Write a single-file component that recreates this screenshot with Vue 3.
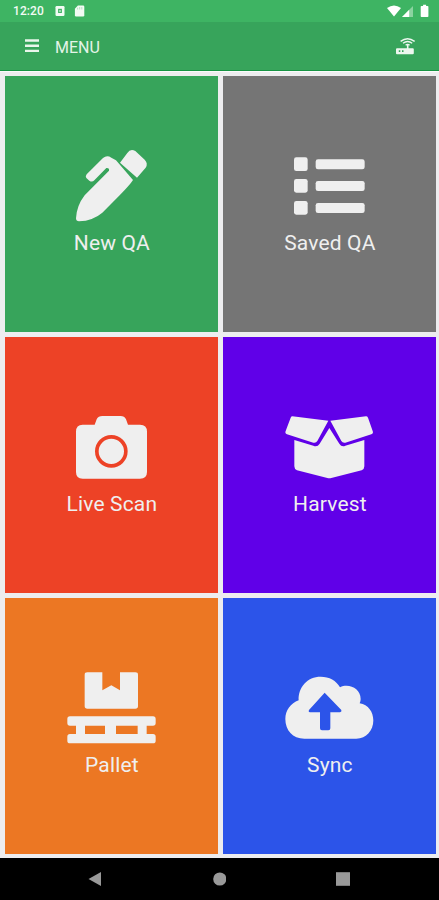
<script setup>
const tiles = [
  { label: 'New QA', color: '#37a45b', icon: 'pen', box: '12 0 288 270' },
  { label: 'Saved QA', color: '#757575', icon: 'list', box: '21 0 288 270' },
  { label: 'Live Scan', color: '#ed4226', icon: 'camera', box: '12 -12 288 270' },
  { label: 'Harvest', color: '#6000e8', icon: 'box', box: '21 -12 288 270' },
  { label: 'Pallet', color: '#ec7723', icon: 'pallet', box: '12 6 288 270' },
  { label: 'Sync', color: '#2c54e9', icon: 'cloud', box: '21 6 288 270' },
]
</script>

<template>
  <div class="screen">
    <div class="status">
      <span class="time">12:20</span>
      <svg class="notices" viewBox="0 0 32 14">
        <rect x="1.5" y="2" width="9" height="10" rx="1.2" fill="#f2fbf4" />
        <path d="M4.1 4.8h3.8v4.2H4.1z" fill="#3eb463" />
        <path d="M5.3 6.2h1.4v1.5H5.3z" fill="#f2fbf4" />
        <path d="M23.9 1.5h5.2q1.2 0 1.2 1.2v8.6q0 1.2-1.2 1.2h-7q-1.2 0-1.2-1.2V4.8z" fill="#f2fbf4" />
        <path d="M23.6 3.7v1.8M25.7 3v2.5M27.8 3v2.5" stroke="#9bd8ad" stroke-width=".7" />
      </svg>
      <svg class="signals" viewBox="0 0 44 14">
        <path d="M1 4Q8 -1 15 4L8 12.4z" fill="#fff" />
        <path d="M27 2v11H16z" fill="#8bd3a0" />
        <path d="M23.2 5.8V13H16z" fill="#fff" />
        <path d="M35.5 2h1.6V.7h3V2h1.5q.8 0 .8.8v9.4q0 .8-.8.8h-6.1q-.8 0-.8-.8V2.8q0-.8.8-.8z" fill="#fff" />
      </svg>
    </div>
    <header class="bar">
      <svg class="burger" viewBox="0 0 14 14">
        <path d="M0 1.5h14M0 6.7h14M0 11.9h14" stroke="#e9f6ec" stroke-width="2.4" />
      </svg>
      <span class="title">MENU</span>
      <svg class="router" viewBox="0 0 20 18">
        <path d="M2 11.2h9.9V7.5h1.6v3.7h4.3q1 0 1 1v4q0 1-1 1H2q-1 0-1-1v-4q0-1 1-1z" fill="#edf7ef" />
        <path d="M3.8 13.3h1.5v1.6H3.8zM7 13.3h1.5v1.6H7z" fill="#37a45b" />
        <path d="M5.6 4.4q7-5.4 14 0M8 6.2q4.6-3.4 9.2 0M10.6 8.2q2-1.6 4 0" fill="none" stroke="#edf7ef" stroke-width="1.4" />
      </svg>
    </header>
    <main class="grid">
      <button v-for="t in tiles" :key="t.label" class="tile" :style="{ background: t.color }">
        <svg class="icon" :viewBox="t.box">
          <g v-if="t.icon === 'pen'">
            <path d="M180 68L202 39Q211 25 226 33L254 59Q265 70 257 83L231 113Z" />
            <path d="M168 61L219 120Q211 133 179 166L127 218Q99 242 57 244Q48 244 48 235Q50 197 74 166L147 92Q149 83 139 84L103 121Q96 128 88 122L79 114Q75 109 80 103L129 54Q141 44 154 53Z" />
          </g>
          <g v-else-if="t.icon === 'list'">
            <rect v-for="y in [52, 117, 183]" :key="y" x="57" :y="y" width="41" height="41" rx="7" />
            <rect v-for="y in [58, 123, 189]" :key="'l' + y" x="122" :y="y" width="147" height="30" rx="7" />
          </g>
          <g v-else-if="t.icon === 'camera'">
            <path d="M68 59H104L110 43Q115 33 127 33H182Q193 33 198 43L204 59H240Q261 59 261 80V201Q261 221 240 221H68Q48 221 48 201V80Q48 59 68 59Z" />
            <circle cx="154" cy="139" r="43.5" fill="none" :stroke="t.color" stroke-width="11" />
          </g>
          <g v-else-if="t.icon === 'box'">
            <path d="M52 34L160 47L127 108Q123 115 115 113L36 88Q29 85 32 78L47 38Q49 34 52 34Z" />
            <path d="M273 34L166 47L199 108Q203 115 211 113L289 88Q296 85 293 78L279 38Q277 34 273 34Z" />
            <path d="M58 105L115 122Q127 127 134 116L163 69L193 116Q200 127 211 122L268 105V184Q268 193 260 196L169 219Q163 221 157 219L66 196Q58 193 58 184Z" />
          </g>
          <g v-else-if="t.icon === 'pallet'">
            <path d="M82 37H127V91L154 76L180 91V37H226Q234 37 234 44V139Q234 146 226 146H82Q74 146 74 139V44Q74 37 82 37Z" />
            <path fill-rule="evenodd" d="M30 169H279Q287 169 287 177V189Q287 197 279 197H260V222H279Q287 222 287 230V242Q287 250 279 250H30Q22 250 22 242V230Q22 222 30 222H48V197H30Q22 197 22 189V177Q22 169 30 169ZM75 197V222H135V197ZM168 197V222H233V197Z" />
          </g>
          <g v-else>
            <path d="M88 236C53 236 31 211 31 177C31 151 47 130 71 121C69 82 97 50 137 50C163 50 184 62 195 82C222 69 257 86 257 117Q257 124 254 130C280 134 295 156 295 181C295 212 274 236 244 236Z" />
            <path d="M149 98L199 150Q201 156 195 157H166V205Q166 211 160 211H141Q135 211 135 205V157H105Q99 156 102 150Z" :fill="t.color" />
          </g>
        </svg>
        <span class="label">{{ t.label }}</span>
      </button>
    </main>
    <nav class="nav">
      <svg viewBox="0 0 14 16"><path d="M13 1v14L.5 8z" /></svg>
      <svg viewBox="0 0 14 16"><circle cx="7.8" cy="8" r="6.6" /></svg>
      <svg viewBox="0 0 14 16"><path d="M0 1.2h14v13.6H0z" /></svg>
    </nav>
  </div>
</template>

<style>
body { margin: 0; overflow: hidden; }
</style>

<style scoped>
.screen {
  display: flex;
  flex-direction: column;
  width: 439px;
  height: 900px;
  background: #ededef;
  font-family: Roboto, sans-serif;
}
.status {
  display: flex;
  align-items: center;
  box-sizing: border-box;
  height: 22px;
  padding: 0 9px 0 13px;
  background: #3eb463;
}
.time { width: 41px; color: #f2fbf4; font-size: 12px; font-weight: 500; letter-spacing: .1px; }
.notices { width: 32px; height: 14px; }
.signals { width: 44px; height: 14px; margin-left: auto; }
.bar {
  display: flex;
  align-items: center;
  box-sizing: border-box;
  height: 49px;
  padding: 0 24px 0 25px;
  border-bottom: 1px solid #169443;
  background: #37a45b;
}
.burger { width: 14px; height: 14px; }
.title { margin-left: 16px; padding-top: 2px; color: #e4f4e8; font-size: 16px; }
.router { width: 20px; height: 18px; margin-left: auto; }
.grid {
  display: grid;
  grid-template-columns: 1fr 1fr;
  grid-template-rows: repeat(3, 1fr);
  gap: 5px;
  box-sizing: border-box;
  height: 787px;
  padding: 5px 2.6px 4px 5.4px;
  border-top: 1px solid #fafafa;
  padding-top: 4px;
}
.tile {
  display: flex;
  flex-direction: column;
  align-items: center;
  min-height: 0;
  padding: 64px 0 0;
  border: 0;
  font-family: inherit;
}
.icon { flex: none; width: 96px; height: 90px; fill: #efefef; }
.label { color: #efefef; font-size: 21px; line-height: 26px; letter-spacing: .15px; }
.nav {
  display: flex;
  flex: 1;
  align-items: center;
  justify-content: space-between;
  padding: 0 89px 0 88px;
  background: #000;
}
.nav svg { width: 14px; height: 16px; fill: #999; }
</style>
